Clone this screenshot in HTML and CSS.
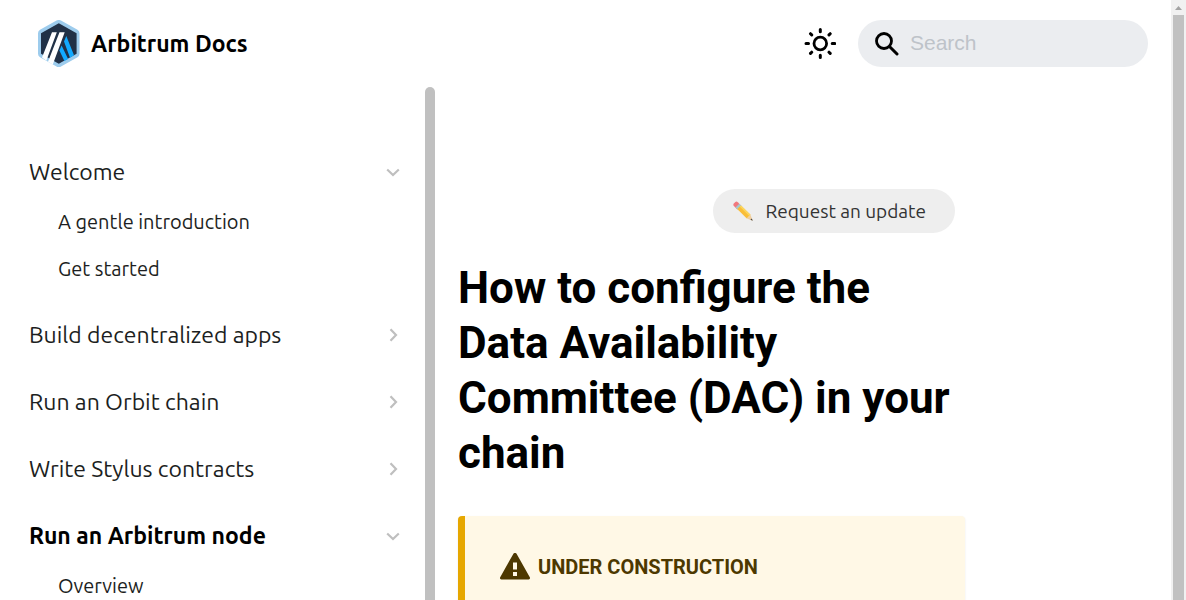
FILE: index.html
```html
<!DOCTYPE html>
<html lang="en">
<head>
<meta charset="utf-8">
<meta name="viewport" content="width=device-width, initial-scale=1">
<title>How to configure the Data Availability Committee (DAC) in your chain | Arbitrum Docs</title>
<link rel="stylesheet" href="styles.css">
</head>
<body>
<div class="page">
  <header class="navbar">
    <a class="brand" href="#">
      <svg class="brand-logo" viewBox="0 0 42 47" aria-hidden="true">
        <path d="M18.500.6a4.500 4.500 0 0 1 4.500 0L39.500 9.800a4 4 0 0 1 2 3.500v20.400a4 4 0 0 1-2 3.500L23 46.400a4.500 4.500 0 0 1-4.500 0L2 37.200a4 4 0 0 1-2-3.500V13.300a4 4 0 0 1 2-3.500z" fill="#9dcced"/>
        <path d="M20.800 3.200 38.600 13.200v20.600L20.800 43.800 3 33.800V13.200z" fill="#213147"/>
        <path d="M28.300 16 36 35.200l-4 2.600L26 21.500zM23.600 25.500l6.500 13.500-3.700 2-5-10.500z" fill="#12aaff"/>
        <path d="M14 12.200h4.800L8.300 40.700 4 37.500zM21.500 12.200h5.200L14.800 44.500 10 41.800z" fill="#fff"/>
      </svg>
      <span>Arbitrum Docs</span>
    </a>
    <div class="nav-tools">
      <button class="theme-toggle" type="button" aria-label="Switch colour mode">
        <svg viewBox="0 0 32 32" fill="none" stroke="#000" stroke-width="3" stroke-linecap="round" aria-hidden="true">
          <circle cx="16.300" cy="15.500" r="6.300" stroke-width="2.800"/>
          <path d="M16.300 1.500v2.300M16.300 27.300v2.300M2 15.500h2.500M28.200 15.500h2.500M6.500 5.700l1.200 1.200M25 24.200l1.200 1.200M6.500 25.400l1.200-1.200M25 6.900l1.200-1.200"/>
        </svg>
      </button>
      <label class="search">
        <svg class="search-icon" viewBox="0 0 24 24" fill="none" stroke="#000" aria-hidden="true">
          <circle cx="9" cy="9" r="7.500" stroke-width="2.800"/>
          <path d="m14.500 14.500 7.500 7.500" stroke-width="3" stroke-linecap="round"/>
        </svg>
        <input class="search-input" type="search" placeholder="Search" aria-label="Search">
      </label>
    </div>
  </header>
  <div class="layout">
    <aside class="sidebar">
      <nav class="menu" aria-label="Docs">
        <ul class="menu-list">
          <li>
            <a class="menu-link" href="#">Welcome<svg class="chevron" viewBox="0 0 14 14"><path d="m1.200 4.500 5.800 5.500 5.800-5.500"/></svg></a>
            <ul class="submenu">
              <li><a class="submenu-link" href="#">A gentle introduction</a></li>
              <li><a class="submenu-link" href="#">Get started</a></li>
            </ul>
          </li>
          <li><a class="menu-link" href="#">Build decentralized apps<svg class="chevron" viewBox="0 0 14 14"><path d="M4.500 1.200 10 7l-5.500 5.800"/></svg></a></li>
          <li><a class="menu-link" href="#">Run an Orbit chain<svg class="chevron" viewBox="0 0 14 14"><path d="M4.500 1.200 10 7l-5.500 5.800"/></svg></a></li>
          <li><a class="menu-link" href="#">Write Stylus contracts<svg class="chevron" viewBox="0 0 14 14"><path d="M4.500 1.200 10 7l-5.500 5.800"/></svg></a></li>
          <li>
            <a class="menu-link active" href="#">Run an Arbitrum node<svg class="chevron" viewBox="0 0 14 14"><path d="m1.200 4.500 5.800 5.500 5.800-5.500"/></svg></a>
            <ul class="submenu">
              <li><a class="submenu-link" href="#">Overview</a></li>
            </ul>
          </li>
        </ul>
      </nav>
      <div class="sidebar-thumb"></div>
    </aside>
    <main class="content">
      <article class="article">
        <div class="actions">
          <a class="update-link" href="#">
            <svg class="pencil" viewBox="0 0 20 20" aria-hidden="true">
              <path d="M4.800 1.200 8 4.400 4 8.200.9 5A2 2 0 0 1 .8 2.500L2.300 1a2 2 0 0 1 2.500.2z" fill="#f1787d"/>
              <path d="m6.300 2.700 2.500 2.500L5 9 2.500 6.500z" fill="#a5c9d0"/>
              <path d="m8 4.400 9.500 9.300-3.700 3.700L4.200 8z" fill="#f9bd38"/>
              <path d="m8 4.400 9.500 9.300-1.200 1.200-9.600-9.300z" fill="#fbd65c"/>
              <path d="m17.500 13.700 2.200 6-5.900-2.300z" fill="#f0ce9e"/>
              <path d="m18.900 17.400.8 2.300-2.300-.9z" fill="#444"/>
            </svg>
            <span>Request an update</span>
          </a>
        </div>
        <h1 class="title">How to configure the Data Availability Committee (DAC) in your chain</h1>
        <section class="admonition">
          <h2 class="admonition-heading">
            <svg class="warning" viewBox="0 0 30 27" aria-hidden="true">
              <path fill-rule="evenodd" d="M13.300.9a2 2 0 0 1 3.400 0L29.800 24.200a1.500 1.500 0 0 1-1.300 2.300h-27A1.500 1.500 0 0 1 .2 24.200zM13 9.500v7h4v-7zm0 9.500v4h4v-4z" fill="#4d3800"/>
            </svg>
            <span>UNDER CONSTRUCTION</span>
          </h2>
        </section>
      </article>
    </main>
  </div>
</div>
<div class="scrollbar" aria-hidden="true">
  <svg class="scroll-arrow" viewBox="0 0 15 15"><path d="M4 10h7L7.500 6z" fill="#a3a3a3"/></svg>
  <div class="scroll-thumb"></div>
</div>
</body>
</html>
```
FILE: styles.css
```css
* { box-sizing: border-box; }

body {
  margin: 0;
  height: 100vh;
  display: flex;
  overflow: hidden;
  background: #fff;
  color: #1c1e21;
  font-family: Ubuntu, "Noto Sans", sans-serif;
}

a { color: inherit; text-decoration: none; }
ul { list-style: none; margin: 0; padding: 0; }
svg { display: block; flex: none; }

.page {
  flex: 1;
  min-width: 0;
  display: flex;
  flex-direction: column;
}

.navbar {
  flex: none;
  display: flex;
  align-items: center;
  justify-content: space-between;
  padding: 20px 23px 20px 38px;
}

.brand {
  display: flex;
  align-items: center;
  gap: 11px;
  color: #000;
  font-size: 23px;
  line-height: 26px;
  font-weight: 700;
}
.brand-logo { width: 42px; height: 47px; }

.nav-tools { display: flex; align-items: center; gap: 22px; }
.theme-toggle { border: 0; padding: 0; background: none; }
.theme-toggle svg { width: 32px; height: 32px; }

.search {
  display: flex;
  align-items: center;
  gap: 11px;
  width: 290px;
  height: 47px;
  padding: 0 17px;
  border-radius: 24px;
  background: #ebedf0;
}
.search-icon { width: 24px; height: 24px; }
.search-input {
  flex: 1;
  min-width: 0;
  height: 26px;
  border: 0;
  padding: 0 0 2px;
  outline: 0;
  background: none;
  font: 21px "Liberation Sans", Arial, sans-serif;
}
.search-input::placeholder { color: #bec3c9; }

.layout { flex: 1; min-height: 0; display: flex; }

.sidebar {
  flex: none;
  width: 435px;
  display: flex;
  overflow: hidden;
}
.menu { flex: 1; padding: 60px 25px 0 29px; }
.menu-list { display: flex; flex-direction: column; gap: 18px; }
.menu-link {
  display: flex;
  align-items: center;
  justify-content: space-between;
  height: 49px;
  font-size: 23px;
  line-height: 28px;
}
.menu-link.active { font-weight: 700; color: #000; }
.submenu { padding: 2px 0 0 29px; }
.submenu-link { display: block; font-size: 20px; line-height: 47px; }
.chevron {
  width: 14px;
  height: 14px;
  fill: none;
  stroke: #bfbfbf;
  stroke-width: 2.2;
}
.sidebar-thumb {
  width: 10px;
  border-radius: 5px 5px 0 0;
  background: #c0c0c0;
}

.content { flex: 1; min-width: 0; overflow: hidden; }
.article { width: 75%; padding: 102px 22px 0 23px; }

.actions { display: flex; justify-content: flex-end; padding-right: 10px; }
.update-link {
  display: flex;
  align-items: center;
  gap: 12px;
  height: 44px;
  padding: 0 29px 0 20px;
  border-radius: 22px;
  background: #eee;
  color: #333;
  font-size: 19px;
}
.pencil { width: 20px; height: 20px; }

.title {
  margin: 28px 0 35px;
  color: #000;
  font: 700 44px/55px Roboto, sans-serif;
}

.admonition {
  min-height: 160px;
  padding: 37px 35px;
  border-left: 7px solid #e6a700;
  border-radius: 4px;
  background: #fff8e6;
  box-shadow: 0 1px 2px rgba(0, 0, 0, 0.1);
}
.admonition-heading {
  display: flex;
  align-items: center;
  gap: 8px;
  margin: 0;
  color: #4d3800;
  font: 700 20px/26px Roboto, sans-serif;
}
.warning { width: 30px; height: 27px; }

.scrollbar {
  flex: none;
  width: 15px;
  display: flex;
  flex-direction: column;
  background: #f1f1f1;
}
.scroll-arrow { width: 15px; height: 15px; }
.scroll-thumb { flex: 1; margin: 0 2px; background: #c1c1c1; }
```
